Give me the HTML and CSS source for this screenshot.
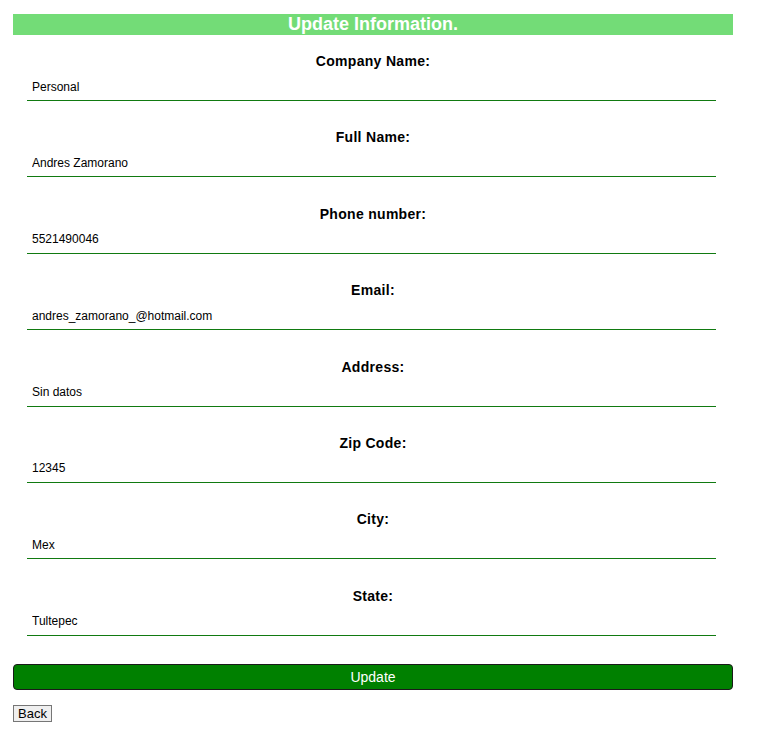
FILE: index.html
```html
<!DOCTYPE html>
<html>
<head>
<meta charset="utf-8">
<link rel="stylesheet" href="styles.css">
</head>
<body>
<div class="page">
  <h1 class="title">Update Information.</h1>
  <form class="form">
    <div class="field"><label class="label">Company Name:</label><input class="input" value="Personal"></div>
    <div class="field"><label class="label">Full Name:</label><input class="input" value="Andres Zamorano"></div>
    <div class="field"><label class="label">Phone number:</label><input class="input" value="5521490046"></div>
    <div class="field"><label class="label">Email:</label><input class="input" value="andres_zamorano_@hotmail.com"></div>
    <div class="field"><label class="label">Address:</label><input class="input" value="Sin datos"></div>
    <div class="field"><label class="label">Zip Code:</label><input class="input" value="12345"></div>
    <div class="field"><label class="label">City:</label><input class="input" value="Mex"></div>
    <div class="field"><label class="label">State:</label><input class="input" value="Tultepec"></div>
    <button type="button" class="update">Update</button>
  </form>
  <button type="button" class="back">Back</button>
</div>
</body>
</html>
```
FILE: styles.css
```css
html, body { margin: 0; padding: 0; background: #fff; }
body { font-family: "Liberation Sans", Arial, sans-serif; }
.page { width: 720px; margin: 0 0 0 13px; padding-top: 14px; }
.title {
  margin: 0;
  height: 21px;
  line-height: 21px;
  background: #73dc77;
  color: #fff;
  font-size: 18px;
  font-weight: bold;
  text-align: center;
}
.form { display: flex; flex-direction: column; padding-top: 17px; }
.field { display: flex; flex-direction: column; margin-bottom: 27.4px; }
.label {
  display: block;
  text-align: center;
  font-size: 14px;
  font-weight: bold;
  line-height: 18px;
  letter-spacing: 0.3px;
  color: #000;
}
.input {
  box-sizing: border-box;
  margin: 5px 0 0 14px;
  width: 689px;
  height: 26px;
  border: none;
  border-bottom: 1px solid #117a11;
  padding: 0 5px 2px;
  font-family: "Liberation Sans", Arial, sans-serif;
  font-size: 12px;
  color: #000;
  outline: none;
  background: #fff;
}
.update {
  margin-top: 0.6px;
  height: 26px;
  width: 720px;
  background: #008000;
  border: 1px solid #1a1a1a;
  border-radius: 4px;
  color: #fff;
  font-family: "Liberation Sans", Arial, sans-serif;
  font-size: 14px;
  padding: 0;
}
.back {
  margin-top: 15px;
  height: 17px;
  padding: 0 4px;
  font-family: "Liberation Sans", Arial, sans-serif;
  font-size: 13px;
  line-height: 15px;
  background: #efefef;
  border: 1px solid #767676;
  border-radius: 0;
  color: #000;
}
```
